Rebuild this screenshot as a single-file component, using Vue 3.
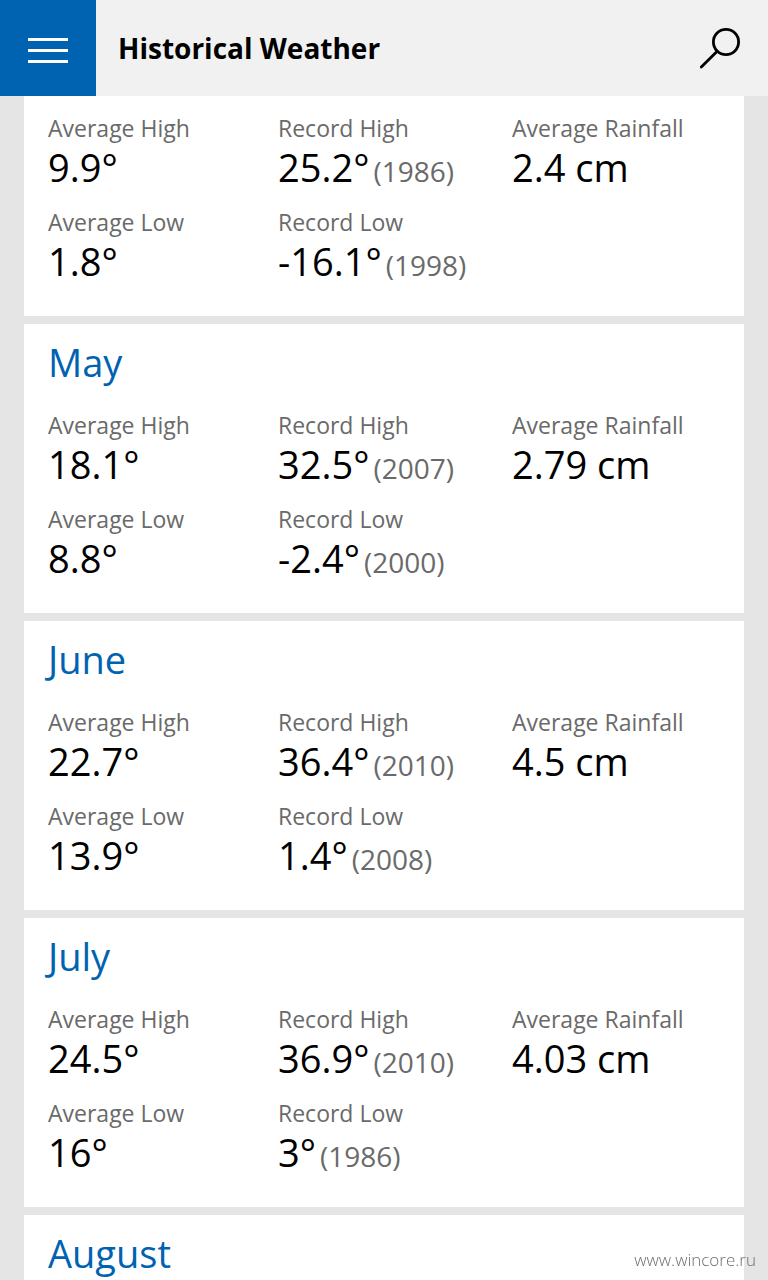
<template>
  <div class="weather-page">
    <header class="top-bar">
      <button class="menu-btn" type="button" aria-label="Menu">
        <span class="menu-line"></span>
        <span class="menu-line"></span>
        <span class="menu-line"></span>
      </button>
      <h1 class="page-title">Historical Weather</h1>
      <button class="search-btn" type="button" aria-label="Search">
        <svg width="44" height="44" viewBox="0 0 44 44" fill="none" stroke="#000" stroke-width="2.8" stroke-linecap="round">
          <circle cx="28" cy="16" r="12.6" />
          <path d="M19.2 25.2 3.3 41" />
        </svg>
      </button>
    </header>

    <main class="month-list">
      <section v-for="(month, i) in months" :key="i" class="month-card" :class="{ continued: !month.name }">
        <h2 v-if="month.name" class="month-name">{{ month.name }}</h2>
        <dl v-if="month.stats" class="stats">
          <div v-for="stat in month.stats" :key="stat.label" class="stat">
            <dt class="stat-label">{{ stat.label }}</dt>
            <dd class="stat-value">
              <span>{{ stat.value }}</span>
              <span v-if="stat.year" class="stat-year">({{ stat.year }})</span>
            </dd>
          </div>
        </dl>
      </section>
    </main>

    <a class="site-mark" href="#">www.wincore.ru</a>
  </div>
</template>

<script setup>
import { ref } from 'vue'

const makeStats = (high, recordHigh, highYear, rainfall, low, recordLow, lowYear) => [
  { label: 'Average High', value: high },
  { label: 'Record High', value: recordHigh, year: highYear },
  { label: 'Average Rainfall', value: rainfall },
  { label: 'Average Low', value: low },
  { label: 'Record Low', value: recordLow, year: lowYear }
]

const months = ref([
  { name: '', stats: makeStats('9.9°', '25.2°', 1986, '2.4 cm', '1.8°', '-16.1°', 1998) },
  { name: 'May', stats: makeStats('18.1°', '32.5°', 2007, '2.79 cm', '8.8°', '-2.4°', 2000) },
  { name: 'June', stats: makeStats('22.7°', '36.4°', 2010, '4.5 cm', '13.9°', '1.4°', 2008) },
  { name: 'July', stats: makeStats('24.5°', '36.9°', 2010, '4.03 cm', '16°', '3°', 1986) },
  { name: 'August', stats: null }
])
</script>

<style>
body {
  margin: 0;
  background: #e5e5e5;
}
</style>

<style scoped>
.weather-page {
  display: flex;
  flex-direction: column;
  height: 100vh;
  background: #e5e5e5;
  color: #000;
  font-family: "Segoe UI", "Open Sans", "Noto Sans", sans-serif;
}

.top-bar {
  display: flex;
  flex: none;
  align-items: stretch;
  height: 96px;
  background: #f1f1f1;
}

.menu-btn,
.search-btn {
  display: flex;
  align-items: center;
  justify-content: center;
  width: 96px;
  padding: 0;
  border: none;
  cursor: pointer;
}

.menu-btn {
  flex-direction: column;
  gap: 8px;
  padding-top: 5px;
  background: #0063b1;
}

.menu-line {
  width: 40px;
  height: 3px;
  background: #fff;
}

.search-btn {
  background: transparent;
}

.page-title {
  flex: 1;
  margin: 0;
  padding-left: 22px;
  font-size: 28px;
  font-weight: 700;
  line-height: 96px;
}

.month-list {
  display: flex;
  flex: 1;
  flex-direction: column;
  gap: 8px;
  min-height: 0;
  padding: 0 24px;
  overflow-y: auto;
  scrollbar-width: none;
}

.month-card {
  flex: none;
  padding: 14px 24px 32px;
  background: #fff;
}

.month-card.continued {
  padding-top: 16px;
}

.month-name {
  margin: 0 0 23px;
  color: #0063b1;
  font-size: 38px;
  font-weight: 400;
  line-height: 48px;
}

.stats {
  display: grid;
  grid-template-columns: minmax(0, 230fr) minmax(0, 234fr) minmax(0, 208fr);
  row-gap: 16px;
  margin: 0;
}

.stat-label {
  color: #6a6a6a;
  font-size: 23px;
  line-height: 32px;
  white-space: nowrap;
}

.stat-value {
  display: flex;
  align-items: baseline;
  gap: 4px;
  height: 46px;
  margin: 0;
  font-size: 38px;
  line-height: 46px;
  white-space: nowrap;
}

.stat-year {
  color: #6a6a6a;
  font-size: 28px;
}

.site-mark {
  position: fixed;
  right: 12px;
  bottom: 8px;
  color: #6e6e6e;
  font-family: "Segoe UI Light", "Open Sans", sans-serif;
  font-size: 17px;
  font-weight: 300;
  line-height: 24px;
  text-decoration: none;
}
</style>
